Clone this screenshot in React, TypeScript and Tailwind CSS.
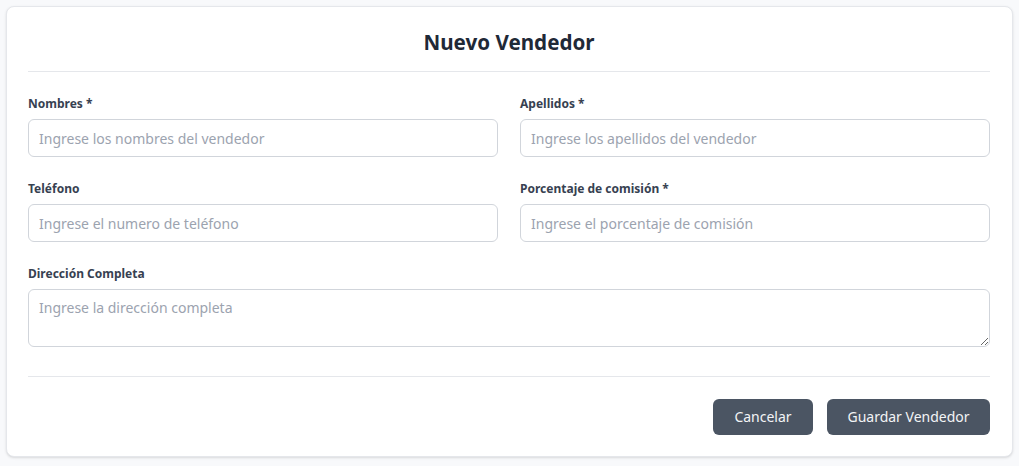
import React from "react";

const inputCls =
  "w-full h-[38px] rounded-md border border-[#d1d5db] bg-white px-2.5 text-sm text-[#1f2937] placeholder:text-[#9ca3af] outline-none";

function Field({ label, placeholder }: { label: string; placeholder: string }) {
  return (
    <div className="flex flex-col">
      <label className="mb-[7px] text-xs leading-4 font-bold text-[#374151]">{label}</label>
      <input className={inputCls} placeholder={placeholder} />
    </div>
  );
}

export default function App() {
  return (
    <div
      className="min-h-[466px] bg-[#f8f9fb] p-1.5"
      style={{ fontFamily: '"Noto Sans", "Open Sans", sans-serif' }}
    >
      <div className="rounded-lg border border-[#e5e7eb] bg-white p-[21px] pr-[22px] shadow-sm">
        <h1 className="border-b border-[#e5e7eb] pb-[15px] text-center text-[20.6px] leading-7 font-bold text-[#1f2937]">
          Nuevo Vendedor
        </h1>
        <div className="mt-6 grid grid-cols-2 gap-x-[22px] gap-y-6">
          <Field label="Nombres *" placeholder="Ingrese los nombres del vendedor" />
          <Field label="Apellidos *" placeholder="Ingrese los apellidos del vendedor" />
          <Field label="Teléfono" placeholder="Ingrese el numero de teléfono" />
          <Field label="Porcentaje de comisión *" placeholder="Ingrese el porcentaje de comisión" />
          <div className="col-span-2 flex flex-col">
            <label className="mb-[7px] text-xs leading-4 font-bold text-[#374151]">Dirección Completa</label>
            <textarea
              rows={2}
              className="w-full rounded-md border border-[#d1d5db] bg-white px-2.5 py-2 text-sm leading-5 text-[#1f2937] placeholder:text-[#9ca3af] outline-none"
              placeholder="Ingrese la dirección completa"
            />
          </div>
        </div>
        <div className="mt-[29px] flex justify-end gap-3.5 border-t border-[#e5e7eb] pt-[22px]">
          <button className="h-9 w-[100px] rounded-md bg-[#4b5563] text-sm text-[#f3f4f6]">Cancelar</button>
          <button className="h-9 w-[163px] rounded-md bg-[#4b5563] text-sm text-[#f3f4f6]">Guardar Vendedor</button>
        </div>
      </div>
    </div>
  );
}
